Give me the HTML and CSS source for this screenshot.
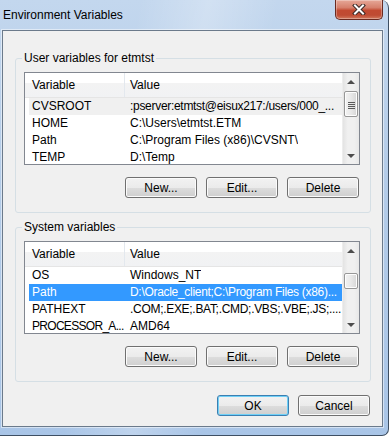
FILE: index.html
```html
<!DOCTYPE html>
<html lang="en">
<head>
  <meta charset="UTF-8">
  <title>Environment Variables</title>
  <link rel="stylesheet" href="styles.css">
</head>
<body>
  <div class="window">
    <div class="titlebar">
      <span class="title">Environment Variables</span>
      <button class="close" aria-label="Close">
        <svg width="14" height="11" viewBox="0 0 14 11">
          <path d="M3 1.5 L11 9.5 M11 1.5 L3 9.5" stroke="#3b2a27" stroke-width="4" stroke-linecap="square"/>
          <path d="M3 1.5 L11 9.5 M11 1.5 L3 9.5" stroke="#fff" stroke-width="2" stroke-linecap="square"/>
        </svg>
      </button>
    </div>

    <div class="client">
      <!-- User variables -->
      <fieldset class="group">
        <legend>User variables for etmtst</legend>
        <div class="list">
          <div class="list-body">
            <div class="list-head">
              <span class="col-var">Variable</span>
              <span class="col-val">Value</span>
            </div>
            <div class="row inactive"><span class="col-var">CVSROOT</span><span class="col-val long">:pserver:etmtst@eisux217:/users/000_...</span></div>
            <div class="row"><span class="col-var">HOME</span><span class="col-val">C:\Users\etmtst.ETM</span></div>
            <div class="row"><span class="col-var">Path</span><span class="col-val">C:\Program Files (x86)\CVSNT\</span></div>
            <div class="row"><span class="col-var">TEMP</span><span class="col-val">D:\Temp</span></div>
          </div>
          <div class="scrollbar">
            <div class="arrow up"></div>
            <div class="track"><div class="thumb thumb-user"></div></div>
            <div class="arrow down"></div>
          </div>
        </div>
        <div class="buttons">
          <button>New...</button>
          <button>Edit...</button>
          <button>Delete</button>
        </div>
      </fieldset>

      <!-- System variables -->
      <fieldset class="group group-sys">
        <legend>System variables</legend>
        <div class="list">
          <div class="list-body">
            <div class="list-head">
              <span class="col-var">Variable</span>
              <span class="col-val">Value</span>
            </div>
            <div class="row"><span class="col-var">OS</span><span class="col-val">Windows_NT</span></div>
            <div class="row selected"><span class="col-var">Path</span><span class="col-val long">D:\Oracle_client;C:\Program Files (x86)...</span></div>
            <div class="row"><span class="col-var">PATHEXT</span><span class="col-val long">.COM;.EXE;.BAT;.CMD;.VBS;.VBE;.JS;....</span></div>
            <div class="row"><span class="col-var long-var">PROCESSOR_A...</span><span class="col-val">AMD64</span></div>
          </div>
          <div class="scrollbar">
            <div class="arrow up"></div>
            <div class="track"><div class="thumb thumb-sys"></div></div>
            <div class="arrow down"></div>
          </div>
        </div>
        <div class="buttons">
          <button>New...</button>
          <button>Edit...</button>
          <button>Delete</button>
        </div>
      </fieldset>

      <div class="dialog-buttons">
        <button class="default">OK</button>
        <button>Cancel</button>
      </div>
    </div>
  </div>
</body>
</html>
```

FILE: styles.css
```css
/* Reset */
* { box-sizing: border-box; margin: 0; padding: 0; }
html, body {
  width: 389px; height: 436px;
  overflow: hidden;
  font-family: "Liberation Sans", Arial, sans-serif;
  font-size: 12px;
  color: #000;
}

/* Aero glass frame */
.window {
  width: 389px;
  height: 436px;
  display: flex;
  flex-direction: column;
  background:
    linear-gradient(100deg, rgba(255,255,255,0) 30%, rgba(255,255,255,.25) 45%, rgba(255,255,255,0) 60%),
    linear-gradient(#c3d7ee, #b4cce8 40%, #a9c5e7);
  border-right: 1px solid #3e4f63;
  border-bottom: 1px solid #3e4f63;
  border-radius: 0 8px 7px 0;
}

/* Title bar */
.titlebar {
  height: 30px;
  display: flex;
  justify-content: space-between;
  align-items: flex-start;
  padding-left: 3px;
}
.title {
  line-height: 30px;
  color: #000;
}
.close {
  width: 48px;
  height: 20px;
  margin-right: 5px;
  display: flex;
  justify-content: center;
  align-items: center;
  border: 1px solid #6a2a20;
  border-top: none;
  border-radius: 0 0 5px 5px;
  background: linear-gradient(#e6a898 0%, #d6806c 40%, #c24a31 55%, #bf4b33 80%, #d27a5e 100%);
  box-shadow: inset 0 0 0 1px rgba(255,255,255,.3);
}

/* Client area */
.client {
  flex: 1;
  margin: 0 5px 8px 2px;
  background: #f0f0f0;
  border: 1px solid #6b7a8b;
  box-shadow: 0 0 0 1px rgba(255,255,255,.5);
  display: flex;
  flex-direction: column;
}

/* Group boxes */
.group {
  margin: 19px 11px 0 12px;
  padding: 6px 10px 14px 8px;
  border: 1px solid #d5dfe5;
  border-radius: 3px;
}
.group-sys { margin-top: 6px; }
.group legend {
  margin-left: -2px;
  padding: 0 2px;
  line-height: 16px;
}

/* List view */
.list {
  height: 93px;
  display: flex;
  background: #fff;
  border: 1px solid #828790;
  overflow: hidden;
}
.list-body {
  flex: 1;
  min-width: 0;
  overflow: hidden;
}
.list-head {
  height: 25px;
  display: flex;
  align-items: center;
  background: linear-gradient(#fff 0, #fff 40%, #f3f3f3 40%, #f1f2f4 100%);
  border-bottom: 1px solid #e5e5e5;
}
.list-head .col-var {
  width: 100px;
  height: 100%;
  line-height: 24px;
  padding-left: 7px;
  border-right: 1px solid #e3e8ee;
}
.list-head .col-val {
  padding-left: 5px;
}
.row {
  height: 17px;
  line-height: 17px;
  margin-left: 4px;
  display: flex;
  white-space: nowrap;
}
.row .col-var {
  width: 96px;
  flex-shrink: 0;
  padding-left: 3px;
  overflow: hidden;
}
.row .col-val {
  padding-left: 5px;
  overflow: hidden;
}
.row .long { letter-spacing: -0.3px; }
.row .long-var { letter-spacing: -0.7px; }
.row.inactive { background: #f0f0f0; }
.row.selected { background: #3399ff; color: #fff; }

/* Scroll bar */
.scrollbar {
  width: 17px;
  flex-shrink: 0;
  display: flex;
  flex-direction: column;
  background: linear-gradient(to right, #e3e3e3, #f0f0f0 30%, #f0f0f0 70%, #e8e8e8);
  border-left: 1px solid #ededed;
}
.arrow {
  height: 17px;
  display: flex;
  justify-content: center;
  align-items: center;
}
.arrow::before {
  content: "";
  border-left: 4px solid transparent;
  border-right: 4px solid transparent;
}
.arrow.up::before { border-bottom: 4px solid #4d4d4d; }
.arrow.down::before { border-top: 4px solid #4d4d4d; }
.track { flex: 1; }
.thumb {
  margin: 0 1px;
  display: flex;
  justify-content: center;
  align-items: center;
  border: 1px solid #979797;
  border-radius: 2px;
  background: linear-gradient(to right, #f3f3f3, #e8e8e8 50%, #d6d6d6);
  box-shadow: inset 0 0 0 1px #fdfdfd;
}
.thumb-user { margin-top: 1px; height: 26px; }
.thumb-user::before {
  content: "";
  width: 7px;
  height: 1px;
  margin-top: -4px;
  background: #5a5a5a;
  box-shadow: 0 2px #5a5a5a, 0 4px #5a5a5a, 0 6px #5a5a5a;
}
.thumb-sys { margin-top: 14px; height: 16px; }

/* Buttons */
.buttons,
.dialog-buttons {
  display: flex;
  justify-content: flex-end;
  gap: 9px;
}
.buttons {
  margin-top: 12px;
  padding-right: 1px;
}
.dialog-buttons {
  margin-top: 13px;
  padding-right: 12px;
}
button {
  font: inherit;
  color: #000;
}
.buttons button,
.dialog-buttons button {
  width: 72px;
  height: 21px;
  border: 1px solid #707070;
  border-radius: 3px;
  background: linear-gradient(#f2f2f2 0%, #ebebeb 50%, #dddddd 50%, #cfcfcf 100%);
  box-shadow: inset 0 0 0 1px #fbfbfb;
}
.dialog-buttons .default {
  border-color: #3c7fb1;
  box-shadow: inset 0 0 0 1px #6fd0f7;
}
```
